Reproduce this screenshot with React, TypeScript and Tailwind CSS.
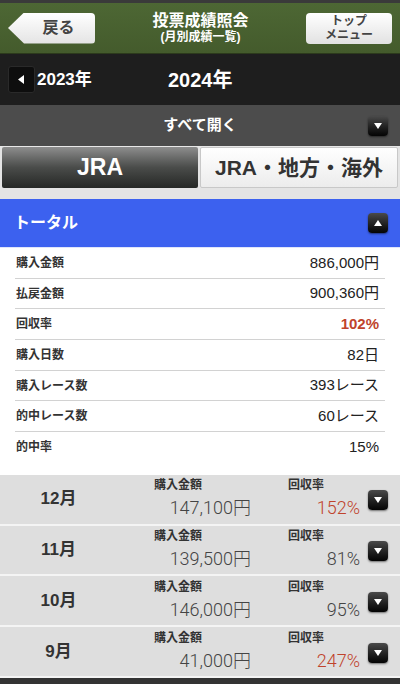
import React from "react";

const font = "font-['Liberation_Sans','Noto_Sans_CJK_JP',sans-serif]";

const totals = [
  { label: "購入金額", value: "886,000円" },
  { label: "払戻金額", value: "900,360円" },
  { label: "回収率", value: "102%", red: true },
  { label: "購入日数", value: "82日" },
  { label: "購入レース数", value: "393レース" },
  { label: "的中レース数", value: "60レース" },
  { label: "的中率", value: "15%" },
];

const months = [
  { month: "12月", amount: "147,100円", rate: "152%", red: true },
  { month: "11月", amount: "139,500円", rate: "81%" },
  { month: "10月", amount: "146,000円", rate: "95%" },
  { month: "9月", amount: "41,000円", rate: "247%", red: true },
];

const ToggleIcon = ({ up = false }: { up?: boolean }) => (
  <div className="flex h-[20px] w-[20px] shrink-0 items-center justify-center rounded-[4px] bg-gradient-to-b from-[#4a4a4a] to-[#050505] shadow-[0_1px_2px_rgba(0,0,0,0.5)]">
    <svg width="10" height="8" viewBox="0 0 10 8">
      {up ? (
        <polygon points="1,7 9,7 5,1" fill="#fff" />
      ) : (
        <polygon points="1,1 9,1 5,7" fill="#fff" />
      )}
    </svg>
  </div>
);

export default function App() {
  return (
    <div className={`w-[400px] min-h-[686px] bg-white ${font}`}>
      {/* header */}
      <div className="h-[3px] bg-[#3a3a3a]" />
      <div className="flex h-[51px] items-center justify-between border-b border-[#2c3a1c] bg-gradient-to-b from-[#4d6734] to-[#445b2c] px-[8px]">
        <div className="flex h-[31px] w-[87px] items-center justify-center rounded-r-[4px] bg-gradient-to-b from-white to-[#e4e4e4] pl-[14px] [clip-path:polygon(0_50%,16px_0,100%_0,100%_100%,16px_100%)]">
          <span className="text-[16px] font-bold text-[#444]">戻る</span>
        </div>
        <div className="flex flex-col items-center text-white">
          <span className="text-[16px] font-bold leading-[18px]">投票成績照会</span>
          <span className="text-[12px] font-bold leading-[14px]">(月別成績一覧)</span>
        </div>
        <div className="flex h-[31px] w-[86px] flex-col items-center justify-center rounded-[4px] bg-gradient-to-b from-white to-[#e2e2e2] text-[12px] font-bold leading-[14px] text-[#444]">
          <span>トップ</span>
          <span>メニュー</span>
        </div>
      </div>

      {/* year row */}
      <div className="relative flex h-[51px] items-center bg-[#1e1e1e] px-[8px]">
        <div className="flex h-[27px] w-[27px] items-center justify-center rounded-[3px] border border-[#2a2a2a] bg-[#0e0e0e]">
          <svg width="7" height="9" viewBox="0 0 7 9">
            <polygon points="6,0 6,9 0,4.5" fill="#fff" />
          </svg>
        </div>
        <span className="ml-[2px] text-[17px] font-bold text-white">2023年</span>
        <span className="absolute left-[168px] text-[20px] font-bold text-white">2024年</span>
      </div>

      {/* open all */}
      <div className="flex h-[42px] items-center border-b border-[#e8e8e8] bg-[#4c4c4c] pr-[12px]">
        <span className="flex-1 pl-[32px] text-center text-[15px] font-bold text-white">すべて開く</span>
        <ToggleIcon />
      </div>

      {/* tabs */}
      <div className="flex h-[41px] gap-[2px] bg-[#e4e4e4] px-[2px]">
        <div className="flex flex-1 items-center justify-center rounded-[2px] bg-gradient-to-b from-[#8e8e8e] via-[#4a4c4a] to-[#262826] text-[23px] font-bold text-white">
          JRA
        </div>
        <div className="flex flex-1 items-center justify-center rounded-[2px] border border-[#c8c8c8] bg-gradient-to-b from-white to-[#ececec] text-[21px] font-bold text-[#333]">
          JRA・地方・海外
        </div>
      </div>
      <div className="h-[11px] bg-[#e4e4e4]" />

      {/* total */}
      <div className="flex h-[49px] items-center justify-between border-b border-[#dfe5fb] bg-[#3c61ef] pl-[14px] pr-[12px]">
        <span className="text-[16px] font-bold text-white">トータル</span>
        <ToggleIcon up />
      </div>
      <div className="mx-[15px] pb-[12px]">
        {totals.map((t, i) => (
          <div
            key={t.label}
            className={`flex h-[30.7px] items-center justify-between pl-[1px] pr-[6px] ${
              i < totals.length - 1 ? "border-b border-[#d2d2d2]" : ""
            }`}
          >
            <span className="text-[12px] font-bold text-[#333]">{t.label}</span>
            <span className={`text-[15px] ${t.red ? "font-bold text-[#c0432c]" : "text-[#222]"}`}>{t.value}</span>
          </div>
        ))}
      </div>

      {/* months */}
      <div>
        {months.map((m) => (
          <div key={m.month} className="flex h-[50.8px] items-center border-b-2 border-[#f4f4f4] bg-[#dedede]">
            <span className="w-[117px] text-center text-[17px] font-bold text-[#333]">{m.month}</span>
            <div className="ml-[37px] flex w-[97px] flex-col">
              <span className="text-[12px] font-bold leading-[16px] text-[#333]">購入金額</span>
              <span className="mt-[2px] self-end font-['Roboto','Noto_Sans_CJK_JP',sans-serif] text-[18px] font-light leading-[26px] text-[#444]">{m.amount}</span>
            </div>
            <div className="ml-[37px] flex w-[72px] flex-col">
              <span className="text-[12px] font-bold leading-[16px] text-[#333]">回収率</span>
              <span
                className={`mt-[2px] self-end font-['Roboto','Noto_Sans_CJK_JP',sans-serif] text-[18px] font-light leading-[26px] ${
                  m.red ? "text-[#c0432c]" : "text-[#444]"
                }`}
              >
                {m.rate}
              </span>
            </div>
            <div className="ml-[8px] mt-[2px]">
              <ToggleIcon />
            </div>
          </div>
        ))}
      </div>
      <div className="h-[6px] bg-[#333]" />
    </div>
  );
}
